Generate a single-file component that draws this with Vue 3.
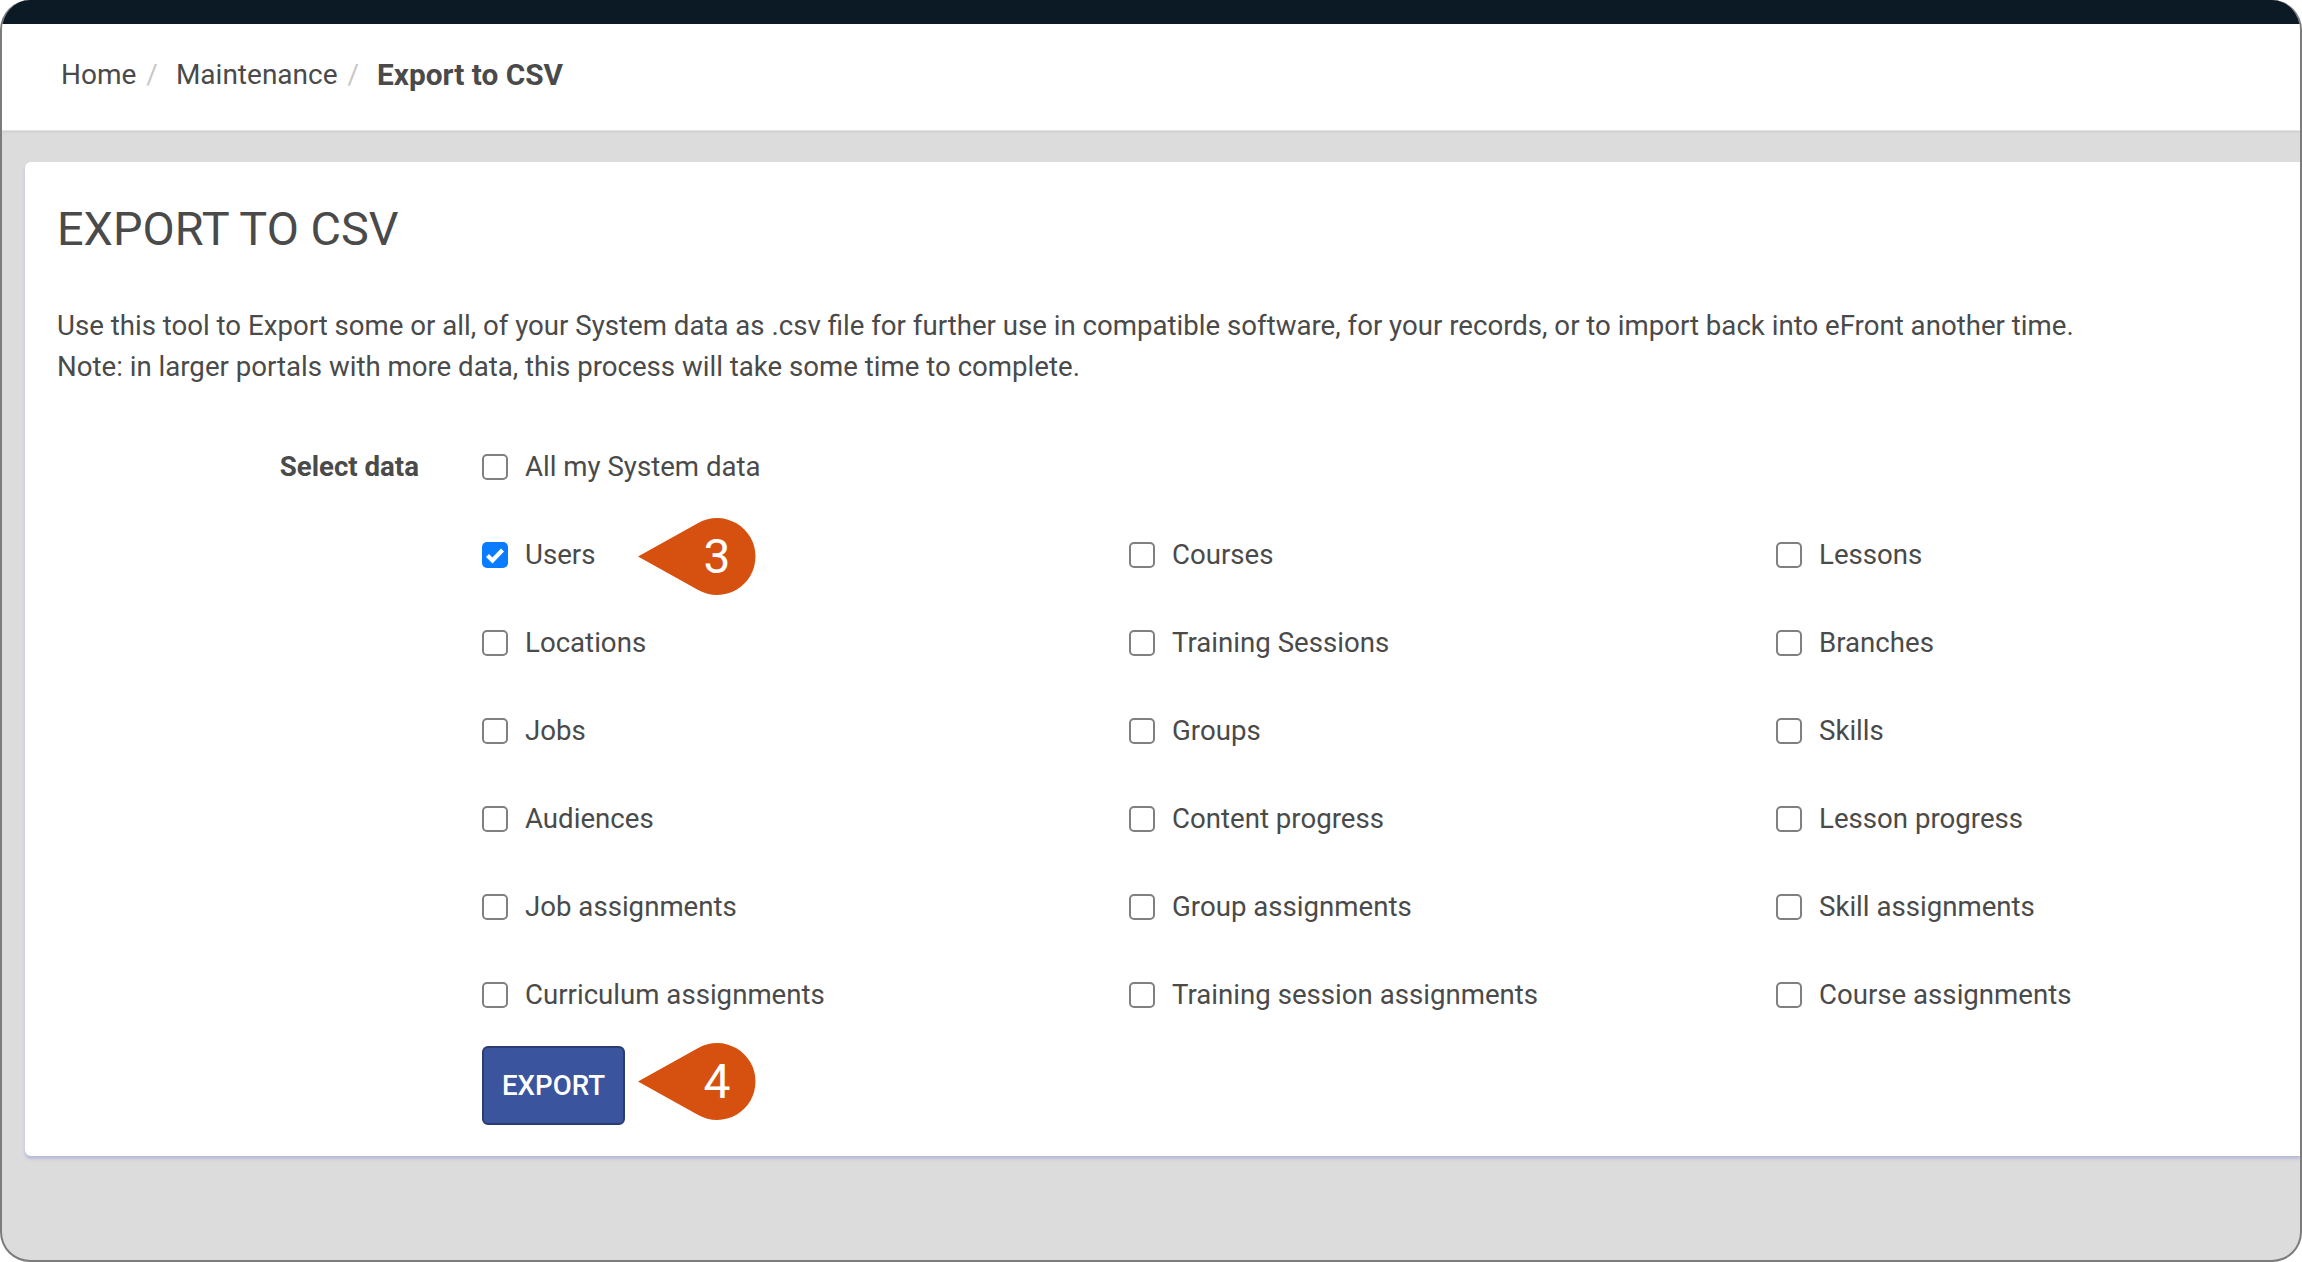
<script setup>
const rows = [
  [{ t: 'Users', on: true }, { t: 'Courses' }, { t: 'Lessons' }],
  [{ t: 'Locations' }, { t: 'Training Sessions' }, { t: 'Branches' }],
  [{ t: 'Jobs' }, { t: 'Groups' }, { t: 'Skills' }],
  [{ t: 'Audiences' }, { t: 'Content progress' }, { t: 'Lesson progress' }],
  [{ t: 'Job assignments' }, { t: 'Group assignments' }, { t: 'Skill assignments' }],
  [{ t: 'Curriculum assignments' }, { t: 'Training session assignments' }, { t: 'Course assignments' }]
]
const items = rows.flat()
</script>

<template>
  <div class="stage">
    <div class="frame">
      <div class="topbar"></div>
      <nav class="crumbs">
        <span class="crumb">Home</span><span class="sep">/</span>
        <span class="crumb">Maintenance</span><span class="sep">/</span>
        <strong class="current">Export to CSV</strong>
      </nav>
      <main class="content">
        <section class="card">
          <h1 class="title">EXPORT TO CSV</h1>
          <p class="intro">
            Use this tool to Export some or all, of your System data as .csv file for further use in compatible software, for your records, or to import back into eFront another time.<br />
            Note: in larger portals with more data, this process will take some time to complete.
          </p>
          <div class="form">
            <div class="form-label">Select data</div>
            <div class="form-body">
              <label class="check first">
                <span class="box"></span>
                <span>All my System data</span>
              </label>
              <div class="grid">
                <label v-for="item in items" :key="item.t" class="check">
                  <span class="box" :class="{ on: item.on }">
                    <svg v-if="item.on" viewBox="0 0 26 26" width="26" height="26">
                      <path d="M5.500 13.500l5 5L20.500 8" fill="none" stroke="#fff" stroke-width="4.200" />
                    </svg>
                  </span>
                  <span>{{ item.t }}</span>
                </label>
              </div>
              <button class="export" type="button">EXPORT</button>
            </div>
          </div>
          <div class="pin pin-three">
            <svg viewBox="0 0 118 77" width="118" height="77"><path d="M0 38.500L60.200 4.900A38.500 38.500 0 1 1 60.200 72.100Z" fill="#d65110" /></svg>
            <span>3</span>
          </div>
          <div class="pin pin-four">
            <svg viewBox="0 0 118 77" width="118" height="77"><path d="M0 38.500L60.200 4.900A38.500 38.500 0 1 1 60.200 72.100Z" fill="#d65110" /></svg>
            <span>4</span>
          </div>
        </section>
      </main>
    </div>
  </div>
</template>

<style>
html, body { margin: 0; background: #fff; }
</style>

<style scoped>
.stage {
  width: 2302px;
  height: 1262px;
  overflow: hidden;
  font-family: Roboto, "Liberation Sans", sans-serif;
  color: #4a4a4a;
}
.frame {
  box-sizing: border-box;
  height: 100%;
  display: flex;
  flex-direction: column;
  overflow: hidden;
  background: #dcdcdc;
  border: 2px solid #7c7c7c;
  border-top: 0;
  border-radius: 30px;
}
.topbar { height: 24px; flex: none; background: #0c1a26; }
.crumbs {
  box-sizing: border-box;
  height: 107px;
  flex: none;
  display: flex;
  align-items: center;
  padding: 0 0 6px 59px;
  background: #fff;
  border-bottom: 1px solid #e6e6e6;
  box-shadow: 0 1px 2px rgba(0, 0, 0, .08);
  font-size: 28px;
}
.sep { color: #c8c8c8; margin: 0 18px 0 10px; }
.current { font-weight: 700; font-size: 29.800px; }
.content { flex: 1; padding: 31px 0 0 23px; }
.card {
  position: relative;
  box-sizing: border-box;
  height: 994px;
  padding: 38px 0 0 32px;
  background: #fff;
  border-radius: 6px 0 0 6px;
  box-shadow: 0 3px 3px rgba(170, 178, 215, .75);
}
.title { margin: 0; font-size: 46.800px; font-weight: 400; line-height: 58px; }
.intro { margin: 47px 0 0; font-size: 27.640px; line-height: 41px; white-space: nowrap; }
.form { display: flex; margin-top: 59px; }
.form-label {
  width: 425px;
  flex: none;
  box-sizing: border-box;
  padding-right: 63px;
  text-align: right;
  font-size: 27.640px;
  font-weight: 700;
  line-height: 41px;
}
.form-body { flex: 1; }
.check {
  display: flex;
  align-items: center;
  gap: 17px;
  height: 41px;
  font-size: 27.640px;
  white-space: nowrap;
}
.first { margin-bottom: 47px; }
.grid {
  display: grid;
  grid-template-columns: repeat(3, 647px);
  row-gap: 47px;
}
.box {
  box-sizing: border-box;
  width: 26px;
  height: 26px;
  flex: none;
  background: #fff;
  border: 2px solid #808080;
  border-radius: 5px;
}
.box.on { background: #0a7cff; border: 0; }
.box svg { display: block; }
.export {
  display: block;
  box-sizing: border-box;
  width: 143px;
  height: 79px;
  margin-top: 31px;
  padding: 0;
  background: #3a559d;
  border: 2px solid #2b3c72;
  border-radius: 6px;
  color: #fff;
  font-family: inherit;
  font-size: 27.640px;
  font-weight: 500;
}
.pin { position: absolute; left: 613px; width: 118px; height: 77px; }
.pin svg { display: block; }
.pin span {
  position: absolute;
  left: 40px;
  right: 0;
  top: 0;
  bottom: 0;
  display: flex;
  align-items: center;
  justify-content: center;
  color: #fff;
  font-size: 48px;
  font-weight: 400;
}
.pin-three { top: 356px; }
.pin-four { top: 881px; }
</style>
